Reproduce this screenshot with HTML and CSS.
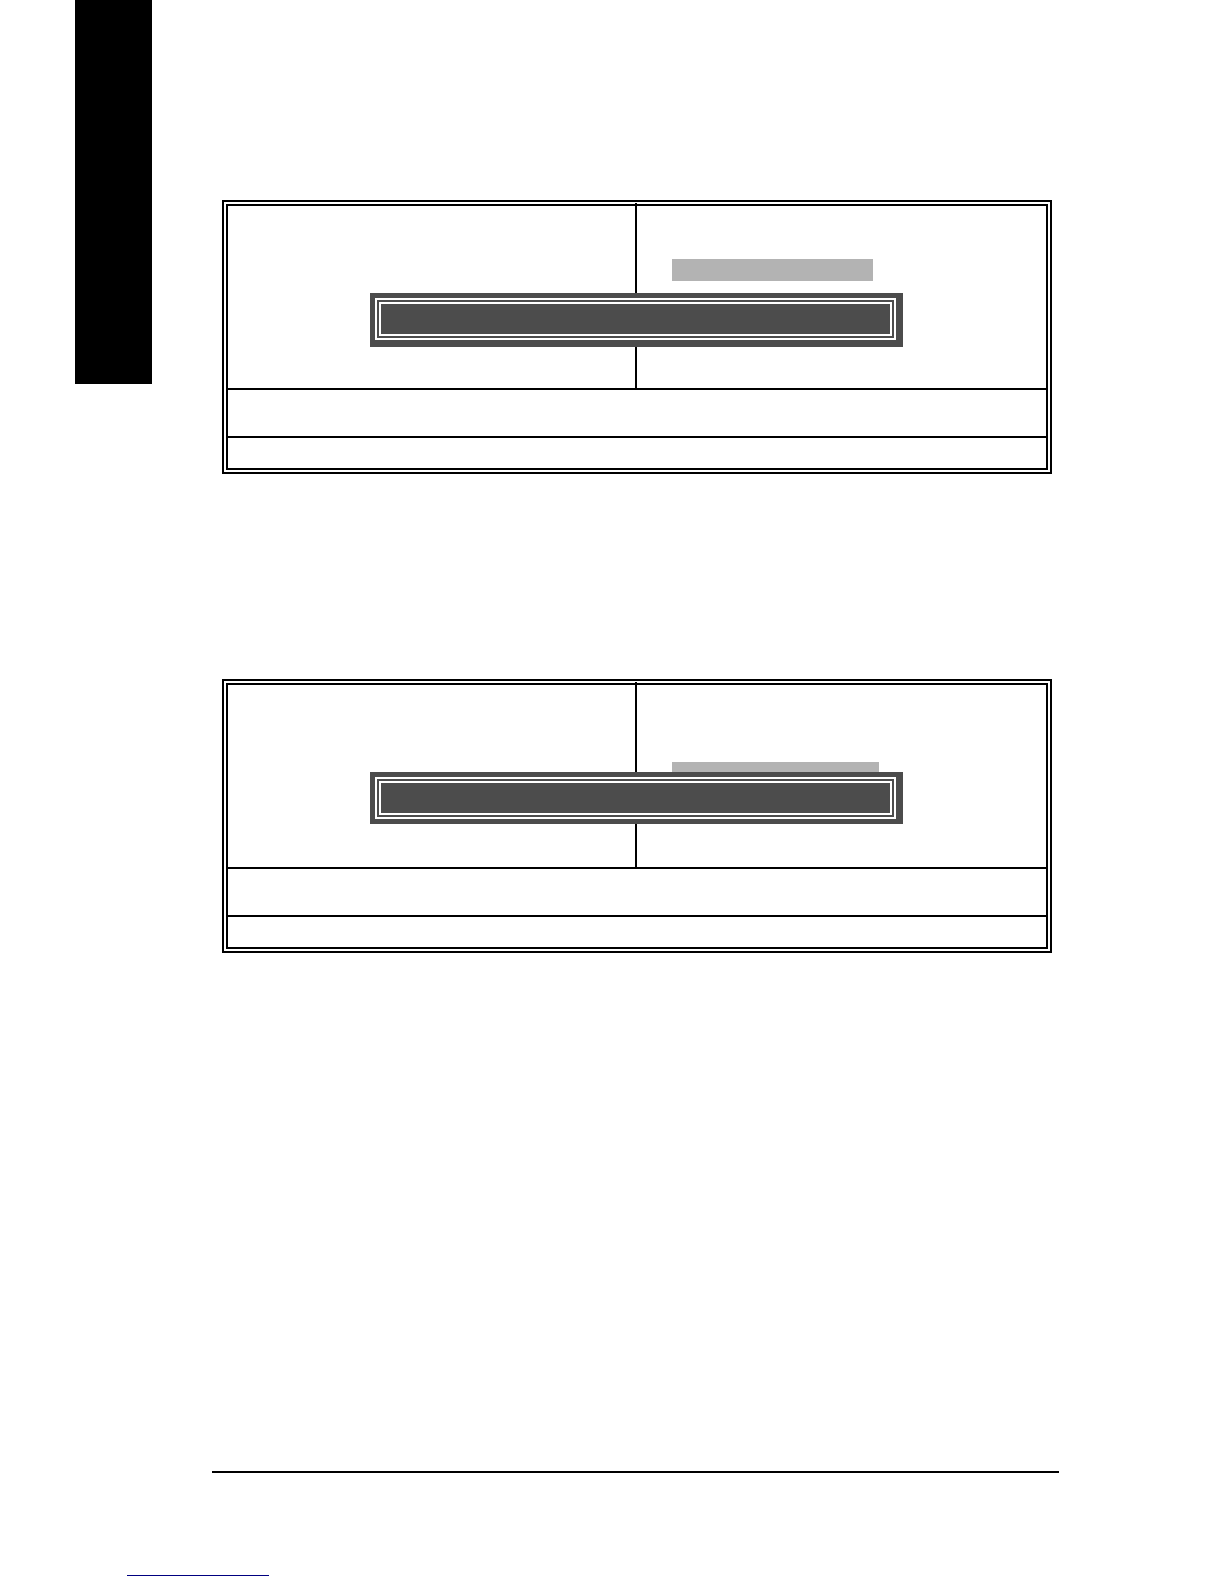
FILE: index.html
```
<!DOCTYPE html>
<html lang="en">
<head>
  <meta charset="utf-8">
  <title></title>
  <link rel="stylesheet" href="styles.css">
</head>
<body>
  <div class="page">
    <div class="tab"></div>
    <main class="content">
      <div class="screen">
        <div class="columns">
          <div class="column"></div>
          <div class="column">
            <div class="highlight"></div>
          </div>
        </div>
        <div class="keys"></div>
        <div class="hint"></div>
        <div class="dialog">
          <div class="dialog-frame"></div>
        </div>
      </div>
      <div class="screen">
        <div class="columns">
          <div class="column"></div>
          <div class="column">
            <div class="highlight highlight-low"></div>
          </div>
        </div>
        <div class="keys"></div>
        <div class="hint"></div>
        <div class="dialog dialog-short">
          <div class="dialog-frame"></div>
        </div>
      </div>
      <hr class="rule">
    </main>
  </div>
  <footer class="footer">
    <a class="link" href="#" aria-label="Top of page"></a>
  </footer>
</body>
</html>
```

FILE: styles.css
```
* {
  margin: 0;
  padding: 0;
  box-sizing: border-box;
}
body {
  background: #fff;
  font-family: "Liberation Sans", sans-serif;
}
.page {
  display: flex;
  align-items: flex-start;
  gap: 60px;
  padding: 0 165px 0 75px;
}
.tab {
  flex: none;
  width: 77px;
  height: 384px;
  background: #000;
}
.content {
  flex: 1;
  padding-top: 200px;
}

/* setup screen */
.screen {
  position: relative;
  margin: 0 7px 205px 10px;
  border: 6px double #000;
}
.columns {
  display: grid;
  grid-template-columns: 1fr 1fr;
  height: 182px;
}
/* the divider runs up into the double border */
.column:first-child {
  margin-top: -3px;
  border-right: 2px solid #000;
}
.column:last-child {
  padding: 53px 35px 0;
}
.highlight {
  width: 201px;
  height: 22px;
  background: #b3b3b3;
}
.highlight-low {
  width: 207px;
  margin-top: 24px;
}
.keys {
  height: 48px;
  border-top: 2px solid #000;
}
.hint {
  height: 32px;
  border-top: 2px solid #000;
}

/* message box over the screen */
.dialog {
  position: absolute;
  top: 87px;
  left: 142px;
  right: 143px;
  padding: 5px 7px 7px 5px;
  background: #4c4c4c;
}
.dialog-short {
  padding-bottom: 5px;
}
.dialog-frame {
  height: 42px;
  border: 6px double #fff;
}

.rule {
  margin-top: 518px;
  border: 0;
  border-top: 2px solid #000;
}
.footer {
  padding: 102px 127px 8px;
}
.link {
  display: block;
  width: 142px;
  border-bottom: 1px solid #000080;
}
```
